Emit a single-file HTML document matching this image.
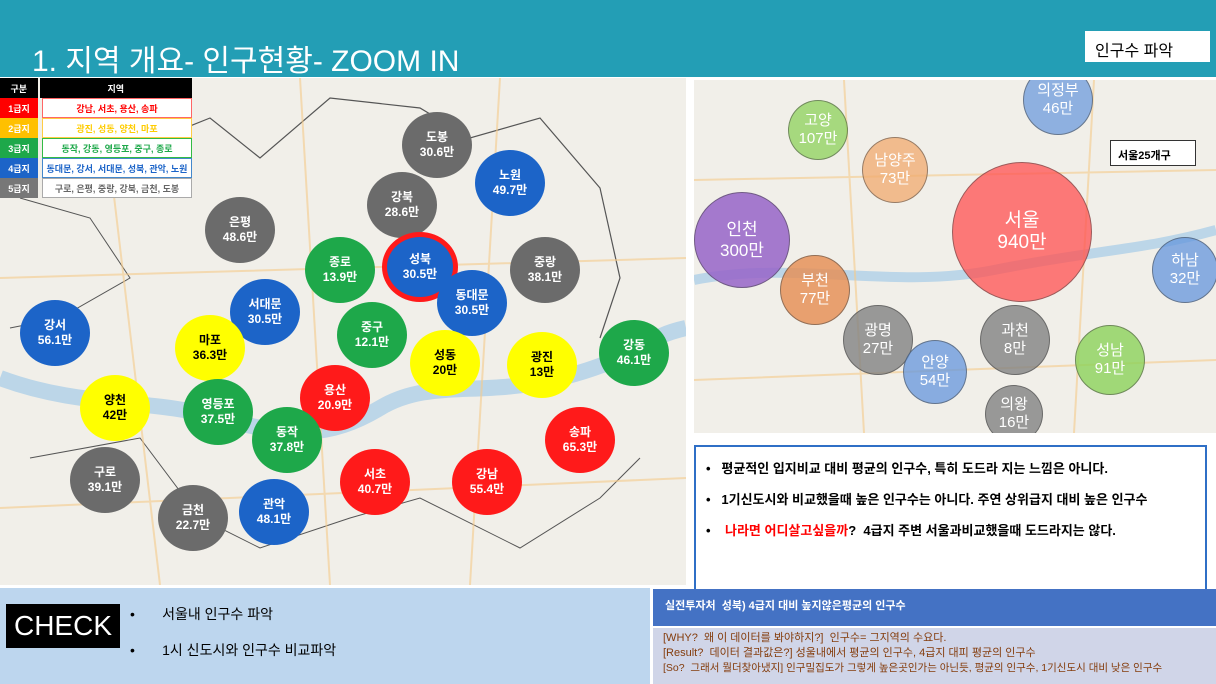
<!DOCTYPE html>
<html><head><meta charset="utf-8"><style>
*{margin:0;padding:0;box-sizing:border-box}
body{width:1216px;height:684px;overflow:hidden;background:#fff;font-family:"Liberation Sans","Noto Sans CJK KR",sans-serif;position:relative}
.hdr{position:absolute;left:0;top:0;width:1216px;height:77px;background:#239eb5}
.title{position:absolute;left:32px;top:36px;color:#fff;font-size:30px;letter-spacing:0px}
.tag{position:absolute;left:1085px;top:31px;width:125px;height:31px;background:#fff;font-size:16px;padding:6px 0 0 10px;color:#000}
.map{position:absolute;background:#f1efe9;overflow:hidden}
.c{position:absolute;border-radius:50%;text-align:center;font-weight:bold;font-size:12px;line-height:15px;display:flex;align-items:center;justify-content:center;color:#fff}
.g{background:#6b6b6b}.b{background:#1c64c8}.gr{background:#1ea84a}.y{background:#ffff00;color:#000}.r{background:#ff1a1a}
.rc{position:absolute;border-radius:50%;text-align:center;font-size:15px;line-height:18px;display:flex;align-items:center;justify-content:center;color:#fff;border:1px solid rgba(60,60,60,.5)}
.lg{position:absolute;left:0;top:78px;width:192px;font-size:9px;font-weight:bold}
.lg div{height:20px;display:flex}
.lg span{display:flex;align-items:center;justify-content:center}
</style></head><body>
<div class="hdr"></div>
<div class="title">1. 지역 개요- 인구현황- ZOOM IN</div>
<div class="tag">인구수 파악</div>

<div class="map" style="left:0;top:78px;width:686px;height:507px">
<svg width="686" height="507" style="position:absolute;left:0;top:0">
<path d="M0 300 C80 330 150 320 220 340 S330 360 380 330 S480 320 560 300 S640 260 686 250" stroke="#bcd6e8" stroke-width="16" fill="none"/>
<path d="M100 20 L160 60 L210 40 L260 80 L330 20 L420 30 L470 60 L540 40 L600 110 L620 200 L600 260" stroke="#555" stroke-width="1.2" fill="none"/>
<path d="M20 120 L90 140 L130 200 L60 240 L10 250" stroke="#555" stroke-width="1" fill="none"/>
<path d="M30 380 L140 360 L200 440 L260 470 L350 440 L420 420 L520 470 L600 420 L640 380" stroke="#555" stroke-width="1" fill="none"/>
<path d="M0 200 L686 180 M100 0 L160 507 M300 0 L330 507 M500 0 L470 507 M0 430 L686 400" stroke="#f5c98a" stroke-width="2" fill="none" opacity=".6"/>
</svg>
</div>
<div class="lg">
<div><span style="width:38px;background:#000;color:#fff">구분</span><span style="width:154px;background:#000;color:#fff;margin-left:2px">지역</span></div>
<div><span style="width:38px;background:#ff0000;color:#fff">1급지</span><span style="width:150px;margin-left:4px;background:#fff;border:1px solid #f66;color:#f00">강남, 서초, 용산, 송파</span></div>
<div><span style="width:38px;background:#ffc000;color:#fff">2급지</span><span style="width:150px;margin-left:4px;background:#fff;border:1px solid #fc4;color:#fc0">광진, 성동, 양천, 마포</span></div>
<div><span style="width:38px;background:#1ea84a;color:#fff">3급지</span><span style="width:150px;margin-left:4px;background:#fff;border:1px solid #3b4;color:#1ea84a">동작, 강동, 영등포, 중구, 종로</span></div>
<div><span style="width:38px;background:#1c64c8;color:#fff">4급지</span><span style="width:150px;margin-left:4px;background:#fff;border:1px solid #48c;color:#1c64c8">동대문, 강서, 서대문, 성북, 관악, 노원</span></div>
<div><span style="width:38px;background:#777;color:#fff">5급지</span><span style="width:150px;margin-left:4px;background:#fff;border:1px solid #aaa;color:#666">구로, 은평, 중랑, 강북, 금천, 도봉</span></div>
</div>

<div class="c g" style="left:402px;top:112px;width:70px;height:66px">도봉<br>30.6만</div>
<div class="c b" style="left:475px;top:150px;width:70px;height:66px">노원<br>49.7만</div>
<div class="c g" style="left:367px;top:172px;width:70px;height:66px">강북<br>28.6만</div>
<div class="c g" style="left:205px;top:197px;width:70px;height:66px">은평<br>48.6만</div>
<div class="c b" style="left:382px;top:232px;width:76px;height:70px;border:5px solid #ff1a1a">성북<br>30.5만</div>
<div class="c g" style="left:510px;top:237px;width:70px;height:66px">중랑<br>38.1만</div>
<div class="c gr" style="left:305px;top:237px;width:70px;height:66px">종로<br>13.9만</div>
<div class="c b" style="left:230px;top:279px;width:70px;height:66px">서대문<br>30.5만</div>
<div class="c b" style="left:437px;top:270px;width:70px;height:66px">동대문<br>30.5만</div>
<div class="c b" style="left:20px;top:300px;width:70px;height:66px">강서<br>56.1만</div>
<div class="c y" style="left:175px;top:315px;width:70px;height:66px">마포<br>36.3만</div>
<div class="c gr" style="left:337px;top:302px;width:70px;height:66px">중구<br>12.1만</div>
<div class="c y" style="left:410px;top:330px;width:70px;height:66px">성동<br>20만</div>
<div class="c y" style="left:507px;top:332px;width:70px;height:66px">광진<br>13만</div>
<div class="c gr" style="left:599px;top:320px;width:70px;height:66px">강동<br>46.1만</div>
<div class="c y" style="left:80px;top:375px;width:70px;height:66px">양천<br>42만</div>
<div class="c r" style="left:300px;top:365px;width:70px;height:66px">용산<br>20.9만</div>
<div class="c gr" style="left:183px;top:379px;width:70px;height:66px">영등포<br>37.5만</div>
<div class="c gr" style="left:252px;top:407px;width:70px;height:66px">동작<br>37.8만</div>
<div class="c r" style="left:545px;top:407px;width:70px;height:66px">송파<br>65.3만</div>
<div class="c g" style="left:70px;top:447px;width:70px;height:66px">구로<br>39.1만</div>
<div class="c r" style="left:340px;top:449px;width:70px;height:66px">서초<br>40.7만</div>
<div class="c r" style="left:452px;top:449px;width:70px;height:66px">강남<br>55.4만</div>
<div class="c g" style="left:158px;top:485px;width:70px;height:66px">금천<br>22.7만</div>
<div class="c b" style="left:239px;top:479px;width:70px;height:66px">관악<br>48.1만</div>

<div class="map" style="left:694px;top:80px;width:522px;height:353px">
<svg width="522" height="353" style="position:absolute;left:0;top:0">
<path d="M0 200 C100 180 200 210 300 190 S450 170 522 150" stroke="#bcd6e8" stroke-width="10" fill="none"/>
<path d="M0 100 L522 90 M0 300 L522 280 M150 0 L170 353 M400 0 L380 353" stroke="#f5c98a" stroke-width="2" fill="none" opacity=".6"/>
</svg>
<div class="rc" style="left:329px;top:-15px;width:70px;height:70px;background:rgba(100,150,220,.7)">의정부<br>46만</div>
<div class="rc" style="left:94px;top:20px;width:60px;height:60px;background:rgba(140,210,90,.75)">고양<br>107만</div>
<div class="rc" style="left:168px;top:57px;width:66px;height:66px;background:rgba(240,170,110,.75)">남양주<br>73만</div>
<div class="rc" style="left:0px;top:112px;width:96px;height:96px;background:rgba(150,100,200,.85);font-size:17px;line-height:21px">인천<br>300만</div>
<div class="rc" style="left:258px;top:82px;width:140px;height:140px;background:rgba(255,80,80,.75);font-size:19px;line-height:22px">서울<br>940만</div>
<div class="rc" style="left:458px;top:157px;width:66px;height:66px;background:rgba(100,150,220,.75)">하남<br>32만</div>
<div class="rc" style="left:86px;top:175px;width:70px;height:70px;background:rgba(230,140,80,.8)">부천<br>77만</div>
<div class="rc" style="left:149px;top:225px;width:70px;height:70px;background:rgba(130,130,130,.8)">광명<br>27만</div>
<div class="rc" style="left:286px;top:225px;width:70px;height:70px;background:rgba(130,130,130,.8)">과천<br>8만</div>
<div class="rc" style="left:209px;top:260px;width:64px;height:64px;background:rgba(100,150,220,.75)">안양<br>54만</div>
<div class="rc" style="left:381px;top:245px;width:70px;height:70px;background:rgba(140,210,90,.8)">성남<br>91만</div>
<div class="rc" style="left:291px;top:305px;width:58px;height:58px;background:rgba(130,130,130,.8)">의왕<br>16만</div>
<div style="position:absolute;left:416px;top:60px;width:86px;height:26px;background:#fff;border:1px solid #333;font-size:11px;font-weight:bold;padding:6px 0 0 7px">서울25개구</div>
</div>

<div style="position:absolute;left:694px;top:445px;width:513px;height:146px;border:2px solid #2f6fc6;border-bottom:none;background:#fff;font-size:13px;font-weight:bold;padding:6px 0 0 10px;line-height:31px;color:#000">
<div>•&nbsp;&nbsp; 평균적인 입지비교 대비 평균의 인구수, 특히 도드라 지는 느낌은 아니다.</div>
<div>•&nbsp;&nbsp; 1기신도시와 비교했을때 높은 인구수는 아니다. 주연 상위급지 대비 높은 인구수</div>
<div>•&nbsp;&nbsp;&nbsp; <span style="color:#f00">나라면 어디살고싶을까</span>?&nbsp; 4급지 주변 서울과비교했을때 도드라지는 않다.</div>
</div>

<div style="position:absolute;left:0;top:588px;width:650px;height:96px;background:#bdd6ee"></div>
<div style="position:absolute;left:6px;top:604px;width:114px;height:44px;background:#000;color:#fff;font-size:28px;text-align:center;line-height:44px">CHECK</div>
<div style="position:absolute;left:130px;top:596px;font-size:14px;line-height:36px">•&nbsp;&nbsp;&nbsp;&nbsp;&nbsp;&nbsp; 서울내 인구수 파악<br>•&nbsp;&nbsp;&nbsp;&nbsp;&nbsp;&nbsp; 1시 신도시와 인구수 비교파악</div>

<div style="position:absolute;left:653px;top:589px;width:563px;height:37px;background:#4472c4;color:#fff;font-size:11px;font-weight:bold;padding:8px 0 0 12px">실전투자처&nbsp; 성북) 4급지 대비 높지않은평균의 인구수</div>
<div style="position:absolute;left:653px;top:628px;width:563px;height:56px;background:#d0d5e8;color:#843c0c;font-size:11px;line-height:15px;padding:3px 0 0 10px">[WHY?&nbsp; 왜 이 데이터를 봐야하지?]&nbsp; 인구수= 그지역의 수요다.<br>[Result?&nbsp; 데이터 결과값은?] 성울내에서 평균의 인구수, 4급지 대피 평균의 인구수<br><span style="font-size:10.5px">[So?&nbsp; 그래서 뭘더찾아냈지] 인구밀집도가 그렇게 높은곳인가는 아닌듯, 평균의 인구수, 1기신도시 대비 낮은 인구수</span></div>
</body></html>
